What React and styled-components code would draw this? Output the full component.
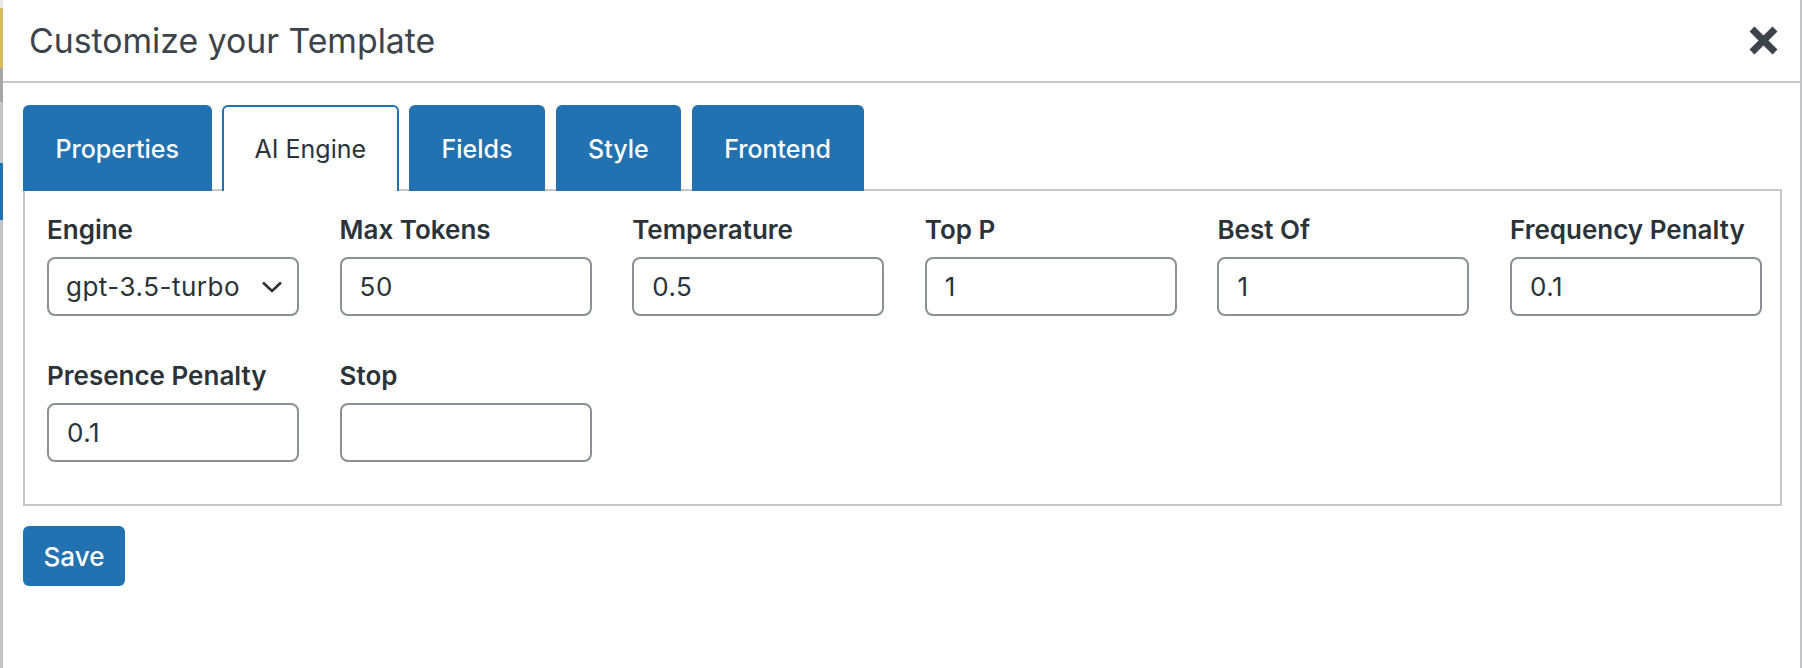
import React from "react";
import styled, { createGlobalStyle } from "styled-components";

const GlobalStyle = createGlobalStyle`
  html, body {
    margin: 0;
    padding: 0;
    background: #c3c4c7;
  }
  body {
    font-family: Inter, "Liberation Sans", Arial, sans-serif;
    overflow: hidden;
  }
`;

const Screen = styled.div`
  display: flex;
  width: 1802px;
  height: 668px;
  overflow: hidden;
`;

const Backdrop = styled.div`
  width: 3px;
  display: flex;
  flex-direction: column;
  flex-shrink: 0;
`;

const Strip = styled.div`
  height: ${p => p.$h}px;
  background: ${p => p.$c};
`;

const Modal = styled.div`
  flex: 1;
  margin-right: 2px;
  background: #fff;
  display: flex;
  flex-direction: column;
`;

const Header = styled.div`
  height: 81px;
  display: flex;
  align-items: center;
  justify-content: space-between;
  padding: 0 21px 0 26px;
  border-bottom: 2px solid #c8c8c8;
`;

const Title = styled.h1`
  margin: 0;
  font-size: 33.8px;
  font-weight: 400;
  color: #3c434a;
`;

const CloseButton = styled.button`
  border: none;
  background: none;
  padding: 0;
  width: 31px;
  height: 31px;
  display: flex;
  cursor: pointer;
`;

const Body = styled.div`
  padding: 22px 18px 0 20px;
`;

const Tabs = styled.div`
  display: flex;
  gap: 10.5px;
  position: relative;
  z-index: 1;
`;

const Tab = styled.button`
  height: 86px;
  margin-bottom: -2px;
  padding: 0 30.5px;
  border: 2px solid #2271b1;
  border-bottom: none;
  border-radius: 6px 6px 0 0;
  background: ${p => (p.$active ? "#fff" : "#2271b1")};
  color: ${p => (p.$active ? "#2c3338" : "#fff")};
  font-family: inherit;
  font-size: 25px;
  font-weight: ${p => (p.$active ? 400 : 500)};
  cursor: pointer;
`;

const Panel = styled.div`
  border: 2px solid #c8c8c8;
  padding: 21px 18px 42px 22px;
`;

const Grid = styled.div`
  display: grid;
  grid-template-columns: repeat(6, 252px);
  column-gap: 40.6px;
  row-gap: 42px;
`;

const Field = styled.label`
  display: flex;
  flex-direction: column;
  gap: 9px;
`;

const Label = styled.span`
  font-size: 26px;
  line-height: 36px;
  font-weight: 600;
  color: #2c3338;
  white-space: nowrap;
`;

const Input = styled.input`
  box-sizing: border-box;
  width: 100%;
  height: 59px;
  padding: 0 18px;
  border: 2px solid #8c8f94;
  border-radius: 8px;
  font-family: inherit;
  font-size: 26px;
  letter-spacing: 0.5px;
  color: #2c3338;
  background: #fff;
  outline: none;
`;

const SelectWrap = styled.div`
  position: relative;
  svg {
    position: absolute;
    right: 16px;
    top: 24px;
    pointer-events: none;
  }
`;

const Select = styled.select`
  box-sizing: border-box;
  width: 100%;
  height: 59px;
  padding: 0 40px 0 17px;
  border: 2px solid #8c8f94;
  border-radius: 8px;
  font-family: inherit;
  font-size: 26px;
  letter-spacing: 0.5px;
  color: #2c3338;
  background: #fff;
  appearance: none;
  outline: none;
`;

const Footer = styled.div`
  padding-top: 20px;
`;

const SaveButton = styled.button`
  width: 102px;
  height: 60px;
  border: none;
  border-radius: 6px;
  background: #2271b1;
  color: #fff;
  font-family: inherit;
  font-size: 26px;
  font-weight: 500;
  cursor: pointer;
`;

const tabs = ["Properties", "AI Engine", "Fields", "Style", "Frontend"];

const fields = [
  { label: "Max Tokens", value: "50" },
  { label: "Temperature", value: "0.5" },
  { label: "Top P", value: "1" },
  { label: "Best Of", value: "1" },
  { label: "Frequency Penalty", value: "0.1" },
  { label: "Presence Penalty", value: "0.1" },
  { label: "Stop", value: "" }
];

const strips = [
  { h: 8, c: "#e6e6e6" },
  { h: 60, c: "#d8bc62" },
  { h: 34, c: "#a7a7a7" },
  { h: 61, c: "#c3c4c7" },
  { h: 57, c: "#2271b1" },
  { h: 448, c: "#c3c4c7" }
];

const App = () => {
  return (
    <>
      <GlobalStyle />
      <Screen>
        <Backdrop>
          {strips.map((s, i) => (
            <Strip key={i} $h={s.h} $c={s.c} />
          ))}
        </Backdrop>
        <Modal>
          <Header>
            <Title>Customize your Template</Title>
            <CloseButton aria-label="Close">
              <svg width="31" height="31" viewBox="0 0 31 31">
                <path
                  d="M4 4 L27 27 M27 4 L4 27"
                  stroke="#3c434a"
                  strokeWidth="7"
                  strokeLinecap="butt"
                />
              </svg>
            </CloseButton>
          </Header>
          <Body>
            <Tabs>
              {tabs.map(t => (
                <Tab key={t} $active={t === "AI Engine"}>
                  {t}
                </Tab>
              ))}
            </Tabs>
            <Panel>
              <Grid>
                <Field>
                  <Label>Engine</Label>
                  <SelectWrap>
                    <Select defaultValue="gpt-3.5-turbo">
                      <option>gpt-3.5-turbo</option>
                      <option>gpt-4</option>
                    </Select>
                    <svg width="22" height="12" viewBox="0 0 22 12">
                      <path
                        d="M2 1.5 L11 10 L20 1.5"
                        fill="none"
                        stroke="#2c3338"
                        strokeWidth="2.6"
                      />
                    </svg>
                  </SelectWrap>
                </Field>
                {fields.map(f => (
                  <Field key={f.label}>
                    <Label>{f.label}</Label>
                    <Input defaultValue={f.value} />
                  </Field>
                ))}
              </Grid>
            </Panel>
            <Footer>
              <SaveButton>Save</SaveButton>
            </Footer>
          </Body>
        </Modal>
      </Screen>
    </>
  );
};

export default App;
